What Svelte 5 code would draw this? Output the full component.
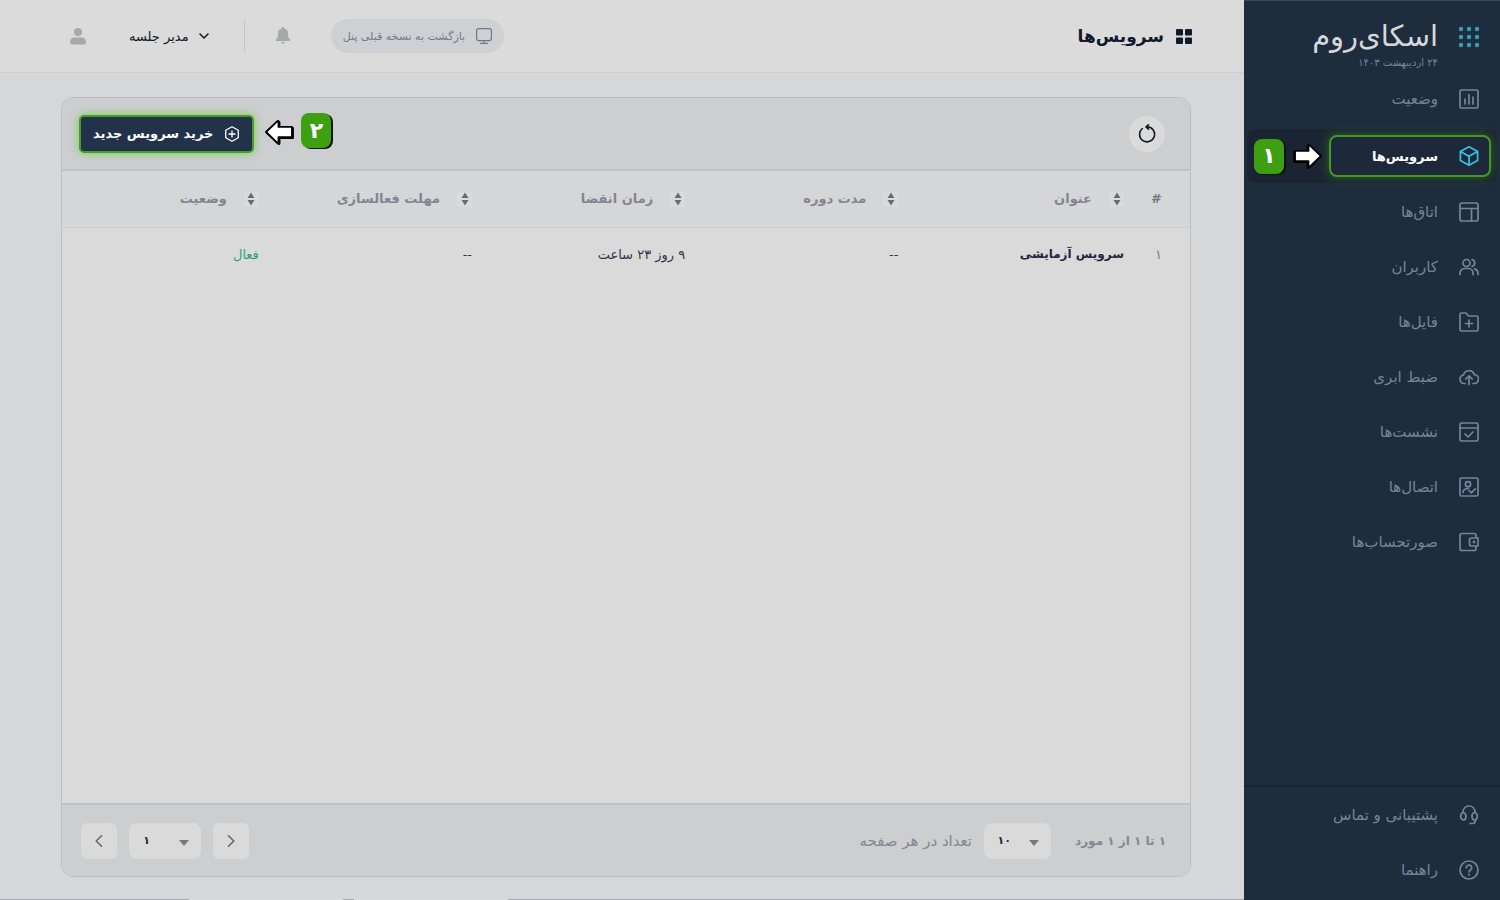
<script>
  const nav = [
    { label: 'وضعیت', icon: 'chart' },
    { label: 'سرویس‌ها', icon: 'box', active: true },
    { label: 'اتاق‌ها', icon: 'layout' },
    { label: 'کاربران', icon: 'users' },
    { label: 'فایل‌ها', icon: 'folder' },
    { label: 'ضبط ابری', icon: 'cloud' },
    { label: 'نشست‌ها', icon: 'calendar' },
    { label: 'اتصال‌ها', icon: 'contact' },
    { label: 'صورتحساب‌ها', icon: 'wallet' }
  ];
  const help = [
    { label: 'پشتیبانی و تماس', icon: 'headset' },
    { label: 'راهنما', icon: 'question' }
  ];
  const columns = ['عنوان', 'مدت دوره', 'زمان انقضا', 'مهلت فعالسازی', 'وضعیت'];
  const rows = [['سرویس آزمایشی', '--', '۹ روز ۲۳ ساعت', '--', 'فعال']];
</script>

{#snippet icon(name)}
  <svg class="icon" viewBox="0 0 20 20" aria-hidden="true">
    {#if name === 'chart'}
      <rect x="1" y="1" width="18" height="18" rx="1.5" /><path d="M6 10v5M10 5.5V15M14 8v7" />
    {:else if name === 'box'}
      <path d="M10 0.8 18.6 5.5v9L10 19.2 1.4 14.5v-9zM1.4 5.5 10 10.2l8.600-4.700M10 10.200v9" />
    {:else if name === 'layout'}
      <rect x="1" y="1" width="18" height="18" rx="2" /><path d="M1 6.500h18M12.500 6.500V19" />
    {:else if name === 'users'}
      <circle cx="7.500" cy="6" r="3.500" /><path d="M1 17.500v-1.500a4.500 4.500 0 0 1 4.500-4.500h4a4.500 4.500 0 0 1 4.500 4.500v1.500M13 2.500a3.600 3.600 0 0 1 0 7M15.500 11.800a4.500 4.500 0 0 1 3.500 4.200v1.500" />
    {:else if name === 'folder'}
      <path d="M1 17V2.500Q1 1 2.500 1H7l2.500 3h8Q19 4 19 5.500V17.500Q19 19 17.500 19h-15Q1 19 1 17.500zM10 8v7M6.500 11.500h7" />
    {:else if name === 'cloud'}
      <path d="M6 16.500H5A4.300 4.300 0 0 1 4.500 8 5.600 5.600 0 0 1 15.300 7.700 4.400 4.400 0 0 1 15 16.500H14M10 17.500V9M6.800 12 10 8.800 13.200 12" />
    {:else if name === 'calendar'}
      <rect x="1" y="1" width="18" height="18" rx="1.500" /><path d="M1 6h18M6 12l3 3 5-5" />
    {:else if name === 'contact'}
      <rect x="1" y="1" width="18" height="18" rx="1.500" /><circle cx="9" cy="7.300" r="2.600" /><path d="M4 15.500c0-3 2-4 5.500-4M10 13.500l2.300 2.300 4-4" />
    {:else if name === 'wallet'}
      <path d="M17 6V3.500Q17 1.500 15 1.500H3Q1 1.500 1 3.500v13Q1 18.500 3 18.500h12q2 0 2-2V14M12.500 6H19v8h-6.500q-2 0-2-2V8q0-2 2-2z" /><circle class="solid" cx="15" cy="10" r="1.400" />
    {:else if name === 'headset'}
      <path d="M4 7.500C4 3.500 6.500 1 10 1s6 2.500 6 6.500M4 7.500A3.500 4 0 0 0 4 15q3 0 3-3.500T4 7.500zM16 7.500q-3 0-3 3.800T16 15a3.500 4 0 0 0 0-7.500zM16.500 15q0 3.500-3 3.500H11" />
    {:else if name === 'question'}
      <circle cx="10" cy="10" r="9" /><path d="M7.300 7.800A2.700 2.700 0 1 1 11.500 10Q10 11 10 12" /><circle class="solid" cx="10" cy="14.800" r="1" />
    {/if}
  </svg>
{/snippet}

{#snippet arrow()}
  <svg class="arrow" viewBox="0 0 32 28" aria-hidden="true">
    <path d="M2 8.500h14.500V3q0-1.500 1.500-0.500L30 14 18 25.500q-1.500 1-1.500-0.500v-5.500H2z" />
  </svg>
{/snippet}

<div class="app" dir="rtl" lang="fa">
  <aside>
    <div class="brand">
      <svg class="dots" viewBox="0 0 22 22" aria-hidden="true">
        {#each [3, 11, 19] as y}
          {#each [3, 11, 19] as x}<circle cx={x} cy={y} r="2.200" />{/each}
        {/each}
      </svg>
      <div>
        <div class="logo">اسکای‌روم</div>
        <div class="date">۲۴ اردیبهشت ۱۴۰۳</div>
      </div>
    </div>
    <nav>
      {#each nav as item}
        {#if item.active}
          <div class="current">
            <a href="#services" aria-current="page">{@render icon(item.icon)}{item.label}</a>
            {@render arrow()}
            <span class="step">۱</span>
          </div>
        {:else}
          <a class="link" href="#top">{@render icon(item.icon)}{item.label}</a>
        {/if}
      {/each}
    </nav>
    <div class="help">
      {#each help as item}
        <a class="link" href="#top">{@render icon(item.icon)}{item.label}</a>
      {/each}
    </div>
  </aside>

  <div class="page">
    <header>
      <svg class="tiles" viewBox="0 0 16 15" aria-hidden="true">
        <rect width="7" height="6.500" rx="1" /><rect x="9" width="7" height="6.500" rx="1" />
        <rect y="8.500" width="7" height="6.500" rx="1" /><rect x="9" y="8.500" width="7" height="6.500" rx="1" />
      </svg>
      <h1>سرویس‌ها</h1>
      <button class="back">
        <svg viewBox="0 0 16 16" aria-hidden="true"><rect x="0.600" y="0.600" width="14.800" height="12" rx="2" /><path d="M8 12.600v2.800M4.500 15.400h7" /></svg>
        بازگشت به نسخه قبلی پنل
      </button>
      <button class="bell" aria-label="اعلان‌ها">
        <svg viewBox="0 0 14 17" aria-hidden="true"><path d="M7 0q1.200 0 1.200 1.400C11 2 12 4 12 6.500c0 3.500.6 4.700 2 6V14H0v-1.500c1.400-1.300 2-2.500 2-6C2 4 3 2 5.800 1.400Q5.800 0 7 0zM5 15h4q-.4 1.700-2 1.700T5 15z" /></svg>
      </button>
      <button class="user">
        <svg class="chevron" viewBox="0 0 10 6" aria-hidden="true"><path d="M1 1l4 4 4-4" /></svg>
        <span>مدیر جلسه</span>
        <svg class="avatar" viewBox="0 0 16 17" aria-hidden="true"><circle cx="8" cy="4" r="4" /><path d="M0 14.500Q0 9.500 4.500 9.500h7Q16 9.500 16 14.500 16 16.500 14 16.500H2Q0 16.500 0 14.500z" /></svg>
      </button>
    </header>

    <main>
      <section class="card">
        <div class="toolbar">
          <button class="refresh" aria-label="بارگذاری مجدد">
            <svg viewBox="0 0 18 19" aria-hidden="true"><path d="M9 2.800A7.500 7.500 0 1 1 4.300 4.500M10.500 0.800 8 2.800l2.500 2.400" /></svg>
          </button>
          <div class="buy-step">
            <span class="step">۲</span>
            {@render arrow()}
            <button class="buy">
              <svg viewBox="0 0 16 16" aria-hidden="true"><path d="M8 .8 14.300 4.300v7.400L8 15.200 1.700 11.700V4.300zM8 5v6M5 8h6" /></svg>
              خرید سرویس جدید
            </button>
          </div>
        </div>
        <div class="content">
          <table>
            <thead>
              <tr>
                <th class="index">#</th>
                {#each columns as column, i}
                  <th class:title={i === 0} class:middle={i > 0 && i < 4}>
                    <div class="heading">
                      <button class="sort" aria-label={column}>
                        <svg viewBox="0 0 8 14" aria-hidden="true"><path d="M4 0.500 7.500 6h-7zM4 13.500 0.500 8h7z" /></svg>
                      </button>
                      {column}
                    </div>
                  </th>
                {/each}
              </tr>
            </thead>
            <tbody>
              {#each rows as row}
                <tr>
                  <td class="index">۱</td>
                  {#each row as value, i}
                    <td class:name={i === 0} class:ok={i === 4}>{value}</td>
                  {/each}
                </tr>
              {/each}
            </tbody>
          </table>
        </div>
        <footer>
          <strong>۱ تا ۱ از ۱ مورد</strong>
          <select id="size"><option>۱۰</option></select>
          <label for="size">تعداد در هر صفحه</label>
          <div class="pager">
            <button aria-label="قبلی"><svg viewBox="0 0 8 12" aria-hidden="true"><path d="M1.500 0.800 6.800 6l-5.300 5.200" /></svg></button>
            <select class="pages" aria-label="صفحه"><option>۱</option></select>
            <button aria-label="بعدی"><svg viewBox="0 0 8 12" aria-hidden="true"><path d="M6.500 0.800 1.200 6l5.300 5.200" /></svg></button>
          </div>
        </footer>
      </section>
    </main>
    <div class="edge"><i></i><b></b><i></i><b></b><i></i></div>
  </div>
</div>

<style>
  :global(body) { margin: 0; }
  * { box-sizing: border-box; }
  .app {
    display: flex;
    min-height: 100vh;
    background: #d6d7d9;
    color: #12192b;
    font-family: "DejaVu Sans", sans-serif;
    font-size: 15px;
  }
  button, select { font: inherit; color: inherit; border: 0; margin: 0; padding: 0; background: none; }
  svg { display: block; flex: none; fill: none; stroke: currentColor; stroke-linecap: round; stroke-linejoin: round; }

  aside {
    width: 256px;
    flex: none;
    display: flex;
    flex-direction: column;
    background: #1e2d3e;
    color: #77839d;
    border-top: 1px solid #3b4a5c;
  }
  .brand { display: flex; gap: 20px; padding: 15px 20px 0 0; height: 70px; }
  .dots { width: 22px; height: 22px; margin-top: 10px; fill: #369fba; stroke: none; }
  .logo { color: #d6d7da; font-size: 29px; line-height: 40px; }
  .date { font-size: 10px; line-height: 14px; }
  .icon { width: 20px; height: 20px; stroke-width: 1.7; }
  .icon .solid { fill: currentColor; stroke: none; }
  .link, .current a { display: flex; align-items: center; gap: 21px; color: inherit; text-decoration: none; }
  .link { height: 55px; padding-right: 21px; }
  .current {
    display: flex;
    align-items: center;
    height: 54px;
    margin: 3px 3px 1px;
    padding: 0 6px 0 7px;
    border-radius: 8px;
    background: #1a2433;
  }
  .current a {
    flex: 1;
    height: 42px;
    padding-right: 10px;
    border: 2px solid #459820;
    border-radius: 8px;
    background: #1d283b;
    box-shadow: 0 0 12px #2e6425;
    color: #fff;
    font-size: 13px;
    font-weight: bold;
  }
  .current .icon { color: #35c3dd; }
  .arrow { width: 30px; height: 26px; fill: #fff; stroke: #000; stroke-width: 2; filter: drop-shadow(-1px 1px 0 #000); }
  .current .arrow { margin: 0 6px 0 9px; }
  .step {
    width: 30px;
    height: 35px;
    flex: none;
    display: grid;
    place-items: center;
    border-radius: 8px;
    background: #3ea011;
    box-shadow: 2px 1px 0 #06150a;
    color: #fff;
    font-size: 22px;
    line-height: 24px;
    font-weight: bold;
  }
  .help { margin-top: auto; padding-bottom: 3px; border-top: 2px solid #182332; }

  .page { flex: 1; min-width: 0; display: flex; flex-direction: column; }
  header {
    display: flex;
    align-items: center;
    height: 73px;
    padding: 0 52px 0 70px;
    background: #dbdbdb;
    border-bottom: 1px solid #cccdd1;
  }
  .tiles { width: 16px; height: 15px; fill: #101c2e; stroke: none; }
  h1 { margin: 0 12px 0 auto; font-size: 17px; line-height: 30px; }
  .back {
    display: flex;
    align-items: center;
    gap: 11px;
    height: 34px;
    padding: 0 12px;
    border-radius: 17px;
    background: #cfd0d3;
    color: #6d7992;
    font-size: 11px;
  }
  .back svg { width: 16px; height: 16px; stroke-width: 1.2; }
  .bell { padding: 7px 41px 8px 31px; height: 32px; border-left: 1px solid #c4c5ca; color: #a7a8ac; }
  .bell svg { width: 14px; height: 17px; fill: currentColor; stroke: none; }
  .user { display: flex; align-items: center; padding-right: 35px; font-size: 13px; }
  .user span { margin: 0 10px 0 43px; }
  .chevron { width: 10px; height: 6px; stroke-width: 1.6; }
  .avatar { width: 16px; height: 17px; fill: #a7a8ac; stroke: none; }

  main { flex: 1; display: flex; padding: 24px 53px 22px 61px; }
  .card {
    flex: 1;
    min-width: 0;
    display: flex;
    flex-direction: column;
    border: 1px solid #bdbec5;
    border-radius: 12px;
    background: #dadada;
    overflow: hidden;
  }
  .toolbar {
    display: flex;
    align-items: center;
    justify-content: space-between;
    height: 73px;
    padding: 0 25px 0 17px;
    background: #cdced0;
    border-bottom: 2px solid #c1c2c8;
  }
  .refresh { width: 36px; height: 36px; display: grid; place-items: center; border-radius: 50%; background: #dadada; }
  .refresh svg { width: 18px; height: 19px; stroke-width: 1.6; }
  .buy-step { display: flex; align-items: center; }
  .buy-step .step { margin-bottom: 6px; }
  .buy-step .arrow { margin: 0 7px 4px 10px; transform: scaleX(-1); }
  .buy {
    display: flex;
    align-items: center;
    gap: 11px;
    height: 38px;
    padding: 0 12px;
    border: 2px solid #4a9c2a;
    border-radius: 5px;
    background: #22324a;
    box-shadow: 0 0 10px #72cf4a;
    color: #fff;
    font-size: 13px;
    font-weight: bold;
  }
  .buy svg { width: 16px; height: 16px; stroke-width: 1.3; }

  .content { flex: 1; }
  table { width: 100%; table-layout: fixed; border-collapse: collapse; }
  th { height: 56px; padding: 0 12px 0 0; background: #d5d6d8; border-bottom: 1px solid #cbccd3; color: #838493; text-align: right; font-size: 13px; }
  td { height: 54px; padding: 0 12px 0 0; color: #33344c; font-size: 13px; }
  .index { width: 54px; padding-right: 28px; color: #777888; }
  .title { width: 20%; }
  .middle { width: 18.9%; }
  .heading { display: flex; align-items: center; gap: 17px; white-space: nowrap; }
  .sort { width: 15px; height: 16px; display: grid; place-items: center; border-radius: 2px; background: #dadada; color: #696a77; }
  .sort svg { width: 8px; height: 14px; fill: currentColor; stroke: none; }
  .name { font-size: 12px; font-weight: bold; color: #25263f; }
  .ok { color: #2ba56c; }

  footer {
    display: flex;
    align-items: center;
    height: 73px;
    padding: 0 24px 0 19px;
    background: #cdced0;
    border-top: 2px solid #c1c2c8;
    color: #858695;
  }
  strong { font-size: 12px; }
  select {
    width: 67px;
    height: 36px;
    appearance: none;
    border-radius: 8px;
    color: #25263f;
    font-size: 11px;
    font-weight: bold;
  }
  footer select {
    margin: 0 24px 0 12px;
    padding-right: 40px;
    background: #dadada url("data:image/svg+xml,%3Csvg xmlns='http://www.w3.org/2000/svg' width='10' height='6'%3E%3Cpath d='M0 0h10L5 6z' fill='%23777786'/%3E%3C/svg%3E") no-repeat right 12px top 17px;
  }
  .pager { display: flex; gap: 12px; margin-right: auto; }
  .pager .pages { width: 72px; margin: 0; padding-right: 51px; }
  .pager button { width: 36px; height: 36px; display: grid; place-items: center; border-radius: 6px; background: #dadada; color: #646572; }
  .pager svg { width: 8px; height: 12px; stroke-width: 1.6; }

  .edge { display: flex; height: 1px; direction: ltr; background: #a4a7ae; }
  .edge i { flex: 189; }
  .edge b { flex: 154; background: #dbdbdb; }
  .edge b + i { flex: 11; }
  .edge i:last-child { flex: 736; }
</style>
